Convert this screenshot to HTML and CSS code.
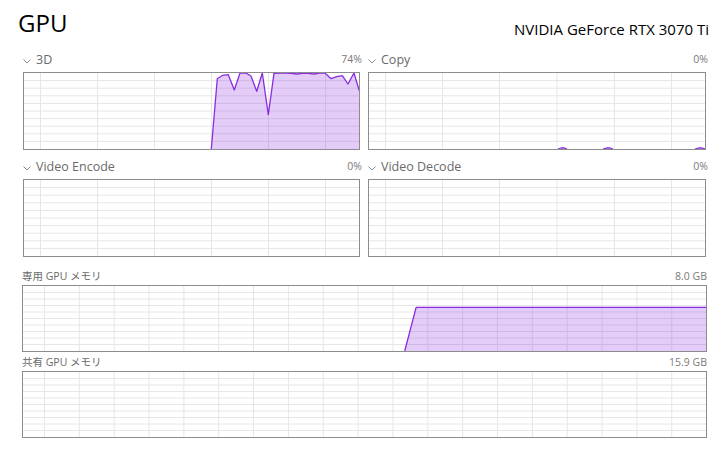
FILE: index.html
```html
<!DOCTYPE html>
<html>
<head>
<meta charset="utf-8">
<link rel="stylesheet" href="styles.css">
</head>
<body>
<div class="page">
  <header class="head">
    <h1 class="title">GPU</h1>
    <div class="device">NVIDIA GeForce RTX 3070 Ti</div>
  </header>

  <div class="grid2">
    <section class="panel">
      <div class="lbl">
        <svg class="chev" width="8" height="5" viewBox="0 0 8 5"><polyline points="0.5,0.5 4,4 7.5,0.5" fill="none" stroke="#8a8a8a" stroke-width="1"/></svg>
        <span class="ttl">3D</span><span class="pct">74%</span>
      </div>
      <div class="chart">
        <svg class="gsvg" viewBox="0 0 335 76" preserveAspectRatio="none">
          <g class="grid">
            <line x1="0" y1="7.6" x2="335" y2="7.6"/><line x1="0" y1="15.2" x2="335" y2="15.2"/><line x1="0" y1="22.8" x2="335" y2="22.8"/><line x1="0" y1="30.4" x2="335" y2="30.4"/><line x1="0" y1="38" x2="335" y2="38"/><line x1="0" y1="45.6" x2="335" y2="45.6"/><line x1="0" y1="53.2" x2="335" y2="53.2"/><line x1="0" y1="60.8" x2="335" y2="60.8"/><line x1="0" y1="68.4" x2="335" y2="68.4"/>
            <line x1="16.5" y1="0" x2="16.5" y2="76"/><line x1="73.5" y1="0" x2="73.5" y2="76"/><line x1="130.5" y1="0" x2="130.5" y2="76"/><line x1="187.5" y1="0" x2="187.5" y2="76"/><line x1="244.5" y1="0" x2="244.5" y2="76"/><line x1="301.5" y1="0" x2="301.5" y2="76"/>
          </g>
          <polygon class="fill" points="187.3,76 193.3,5.7 198.7,2.3 204.3,1.7 210.3,17 216,0 221.7,0 227,3 232.7,18.3 238.3,0 244.3,41.7 250,0.3 256,0 261.3,0 267,0.3 272.7,1 278.3,0.3 284.3,0.3 290,1 295.3,0 301,0 307,5.7 312.7,3.7 318.3,2.7 324,11 330,0 335.3,17.7 335.3,76"/>
          <polyline class="stroke" points="187.3,76 193.3,5.7 198.7,2.3 204.3,1.7 210.3,17 216,0 221.7,0 227,3 232.7,18.3 238.3,0 244.3,41.7 250,0.3 256,0 261.3,0 267,0.3 272.7,1 278.3,0.3 284.3,0.3 290,1 295.3,0 301,0 307,5.7 312.7,3.7 318.3,2.7 324,11 330,0 335.3,17.7"/>
        </svg>
      </div>
    </section>

    <section class="panel">
      <div class="lbl">
        <svg class="chev" width="8" height="5" viewBox="0 0 8 5"><polyline points="0.5,0.5 4,4 7.5,0.5" fill="none" stroke="#8a8a8a" stroke-width="1"/></svg>
        <span class="ttl">Copy</span><span class="pct">0%</span>
      </div>
      <div class="chart">
        <svg class="gsvg" viewBox="0 0 336 76" preserveAspectRatio="none">
          <g class="grid">
            <line x1="0" y1="7.6" x2="336" y2="7.6"/><line x1="0" y1="15.2" x2="336" y2="15.2"/><line x1="0" y1="22.8" x2="336" y2="22.8"/><line x1="0" y1="30.4" x2="336" y2="30.4"/><line x1="0" y1="38" x2="336" y2="38"/><line x1="0" y1="45.6" x2="336" y2="45.6"/><line x1="0" y1="53.2" x2="336" y2="53.2"/><line x1="0" y1="60.8" x2="336" y2="60.8"/><line x1="0" y1="68.4" x2="336" y2="68.4"/>
            <line x1="16.5" y1="0" x2="16.5" y2="76"/><line x1="73.5" y1="0" x2="73.5" y2="76"/><line x1="130.5" y1="0" x2="130.5" y2="76"/><line x1="188" y1="0" x2="188" y2="76"/><line x1="245.5" y1="0" x2="245.5" y2="76"/><line x1="302.5" y1="0" x2="302.5" y2="76"/>
          </g>
          <polyline class="stroke" points="189,76 192,75 195.5,75 198,76"/>
          <polyline class="stroke" points="234,76 237.5,75 241,75 244,76"/>
          <polyline class="stroke" points="326,76 329.5,75 333,75 336,76"/>
        </svg>
      </div>
    </section>

    <section class="panel">
      <div class="lbl">
        <svg class="chev" width="8" height="5" viewBox="0 0 8 5"><polyline points="0.5,0.5 4,4 7.5,0.5" fill="none" stroke="#8a8a8a" stroke-width="1"/></svg>
        <span class="ttl">Video Encode</span><span class="pct">0%</span>
      </div>
      <div class="chart">
        <svg class="gsvg" viewBox="0 0 335 76" preserveAspectRatio="none">
          <g class="grid">
            <line x1="0" y1="7.6" x2="335" y2="7.6"/><line x1="0" y1="15.2" x2="335" y2="15.2"/><line x1="0" y1="22.8" x2="335" y2="22.8"/><line x1="0" y1="30.4" x2="335" y2="30.4"/><line x1="0" y1="38" x2="335" y2="38"/><line x1="0" y1="45.6" x2="335" y2="45.6"/><line x1="0" y1="53.2" x2="335" y2="53.2"/><line x1="0" y1="60.8" x2="335" y2="60.8"/><line x1="0" y1="68.4" x2="335" y2="68.4"/>
            <line x1="16.5" y1="0" x2="16.5" y2="76"/><line x1="73.5" y1="0" x2="73.5" y2="76"/><line x1="130.5" y1="0" x2="130.5" y2="76"/><line x1="187.5" y1="0" x2="187.5" y2="76"/><line x1="244.5" y1="0" x2="244.5" y2="76"/><line x1="301.5" y1="0" x2="301.5" y2="76"/>
          </g>
        </svg>
      </div>
    </section>

    <section class="panel">
      <div class="lbl">
        <svg class="chev" width="8" height="5" viewBox="0 0 8 5"><polyline points="0.5,0.5 4,4 7.5,0.5" fill="none" stroke="#8a8a8a" stroke-width="1"/></svg>
        <span class="ttl">Video Decode</span><span class="pct">0%</span>
      </div>
      <div class="chart">
        <svg class="gsvg" viewBox="0 0 336 76" preserveAspectRatio="none">
          <g class="grid">
            <line x1="0" y1="7.6" x2="336" y2="7.6"/><line x1="0" y1="15.2" x2="336" y2="15.2"/><line x1="0" y1="22.8" x2="336" y2="22.8"/><line x1="0" y1="30.4" x2="336" y2="30.4"/><line x1="0" y1="38" x2="336" y2="38"/><line x1="0" y1="45.6" x2="336" y2="45.6"/><line x1="0" y1="53.2" x2="336" y2="53.2"/><line x1="0" y1="60.8" x2="336" y2="60.8"/><line x1="0" y1="68.4" x2="336" y2="68.4"/>
            <line x1="16.5" y1="0" x2="16.5" y2="76"/><line x1="73.5" y1="0" x2="73.5" y2="76"/><line x1="130.5" y1="0" x2="130.5" y2="76"/><line x1="188" y1="0" x2="188" y2="76"/><line x1="245.5" y1="0" x2="245.5" y2="76"/><line x1="302.5" y1="0" x2="302.5" y2="76"/>
          </g>
        </svg>
      </div>
    </section>
  </div>

  <section class="mem">
    <div class="mlbl"><span>専用 GPU メモリ</span><span class="msize">8.0 GB</span></div>
    <div class="chart mchart">
      <svg class="gsvg" viewBox="0 0 684 65" preserveAspectRatio="none">
        <g class="grid">
          <line x1="0" y1="6.5" x2="684" y2="6.5"/><line x1="0" y1="13" x2="684" y2="13"/><line x1="0" y1="19.5" x2="684" y2="19.5"/><line x1="0" y1="26" x2="684" y2="26"/><line x1="0" y1="32.5" x2="684" y2="32.5"/><line x1="0" y1="39" x2="684" y2="39"/><line x1="0" y1="45.5" x2="684" y2="45.5"/><line x1="0" y1="52" x2="684" y2="52"/><line x1="0" y1="58.5" x2="684" y2="58.5"/>
          <line x1="21.5" y1="0" x2="21.5" y2="65"/><line x1="56.4" y1="0" x2="56.4" y2="65"/><line x1="91.3" y1="0" x2="91.3" y2="65"/><line x1="126.2" y1="0" x2="126.2" y2="65"/><line x1="161.1" y1="0" x2="161.1" y2="65"/><line x1="196" y1="0" x2="196" y2="65"/><line x1="230.9" y1="0" x2="230.9" y2="65"/><line x1="265.8" y1="0" x2="265.8" y2="65"/><line x1="300.7" y1="0" x2="300.7" y2="65"/><line x1="335.6" y1="0" x2="335.6" y2="65"/><line x1="370.5" y1="0" x2="370.5" y2="65"/><line x1="405.4" y1="0" x2="405.4" y2="65"/><line x1="440.3" y1="0" x2="440.3" y2="65"/><line x1="475.2" y1="0" x2="475.2" y2="65"/><line x1="510.1" y1="0" x2="510.1" y2="65"/><line x1="545" y1="0" x2="545" y2="65"/><line x1="579.9" y1="0" x2="579.9" y2="65"/><line x1="614.8" y1="0" x2="614.8" y2="65"/><line x1="649.7" y1="0" x2="649.7" y2="65"/>
        </g>
        <polygon class="fill" points="382.3,65 393.7,21.3 684,21.3 684,65"/>
        <polyline class="stroke" points="382.3,65 393.7,21.3 684,21.3"/>
      </svg>
    </div>
  </section>

  <section class="mem">
    <div class="mlbl"><span>共有 GPU メモリ</span><span class="msize">15.9 GB</span></div>
    <div class="chart mchart">
      <svg class="gsvg" viewBox="0 0 684 65" preserveAspectRatio="none">
        <g class="grid">
          <line x1="0" y1="6.5" x2="684" y2="6.5"/><line x1="0" y1="13" x2="684" y2="13"/><line x1="0" y1="19.5" x2="684" y2="19.5"/><line x1="0" y1="26" x2="684" y2="26"/><line x1="0" y1="32.5" x2="684" y2="32.5"/><line x1="0" y1="39" x2="684" y2="39"/><line x1="0" y1="45.5" x2="684" y2="45.5"/><line x1="0" y1="52" x2="684" y2="52"/><line x1="0" y1="58.5" x2="684" y2="58.5"/>
          <line x1="21.5" y1="0" x2="21.5" y2="65"/><line x1="56.4" y1="0" x2="56.4" y2="65"/><line x1="91.3" y1="0" x2="91.3" y2="65"/><line x1="126.2" y1="0" x2="126.2" y2="65"/><line x1="161.1" y1="0" x2="161.1" y2="65"/><line x1="196" y1="0" x2="196" y2="65"/><line x1="230.9" y1="0" x2="230.9" y2="65"/><line x1="265.8" y1="0" x2="265.8" y2="65"/><line x1="300.7" y1="0" x2="300.7" y2="65"/><line x1="335.6" y1="0" x2="335.6" y2="65"/><line x1="370.5" y1="0" x2="370.5" y2="65"/><line x1="405.4" y1="0" x2="405.4" y2="65"/><line x1="440.3" y1="0" x2="440.3" y2="65"/><line x1="475.2" y1="0" x2="475.2" y2="65"/><line x1="510.1" y1="0" x2="510.1" y2="65"/><line x1="545" y1="0" x2="545" y2="65"/><line x1="579.9" y1="0" x2="579.9" y2="65"/><line x1="614.8" y1="0" x2="614.8" y2="65"/><line x1="649.7" y1="0" x2="649.7" y2="65"/>
        </g>
      </svg>
    </div>
  </section>
</div>
</body>
</html>
```

FILE: styles.css
```css
html, body {
  margin: 0;
  padding: 0;
  background: #ffffff;
}
body {
  width: 723px;
  height: 451px;
  overflow: hidden;
  font-family: "Open Sans", "Noto Sans", "Noto Sans CJK JP", sans-serif;
}
.page {
  display: flex;
  flex-direction: column;
  padding: 0 16px 0 22px;
}
.head {
  height: 49px;
  display: flex;
  justify-content: space-between;
  align-items: flex-start;
}
.title {
  margin: 7px 0 0 -4px;
  font-size: 24px;
  font-weight: 400;
  line-height: 32px;
  color: #000;
}
.device {
  margin-top: 19px;
  margin-right: -2px;
  font-size: 15px;
  line-height: 20px;
  color: #000;
}
.grid2 {
  display: grid;
  grid-template-columns: 337px 338px;
  column-gap: 8px;
  row-gap: 6px;
  margin: 0 1px;
}
.panel {
  display: flex;
  flex-direction: column;
}
.lbl {
  height: 23px;
  display: flex;
  align-items: center;
  color: #6e6e6e;
}
.chev {
  margin: 1px 5px 0 0;
  flex: none;
}
.ttl {
  font-size: 12.5px;
  line-height: 16px;
  color: #6a6a6a;
  margin-top: -1px;
}
.pct {
  margin-left: auto;
  margin-right: -2px;
  font-size: 10.5px;
  line-height: 14px;
  color: #7a7a7a;
  margin-top: -4px;
}
.chart {
  height: 78px;
  box-sizing: border-box;
  border: 1px solid #8c8c8c;
  background: #fff;
}
.gsvg {
  display: block;
  width: 100%;
  height: 100%;
}
.grid line {
  stroke: #e6e6e6;
  stroke-width: 1;
  vector-effect: non-scaling-stroke;
}
.fill {
  fill: rgba(138, 43, 226, 0.24);
  stroke: none;
}
.stroke {
  fill: none;
  stroke: #8a2be2;
  stroke-width: 1.3;
  stroke-linejoin: round;
  vector-effect: non-scaling-stroke;
}
.mem {
  display: flex;
  flex-direction: column;
}
.mlbl {
  display: flex;
  justify-content: space-between;
  align-items: flex-end;
  height: 28px;
  font-size: 10.5px;
  line-height: 14px;
  color: #6a6a6a;
  padding-bottom: 2px;
  box-sizing: border-box;
}
.mem + .mem .mlbl {
  height: 19px;
  padding-bottom: 2px;
}
.msize {
  color: #7a7a7a;
}
.mchart {
  height: 67px;
}
```
